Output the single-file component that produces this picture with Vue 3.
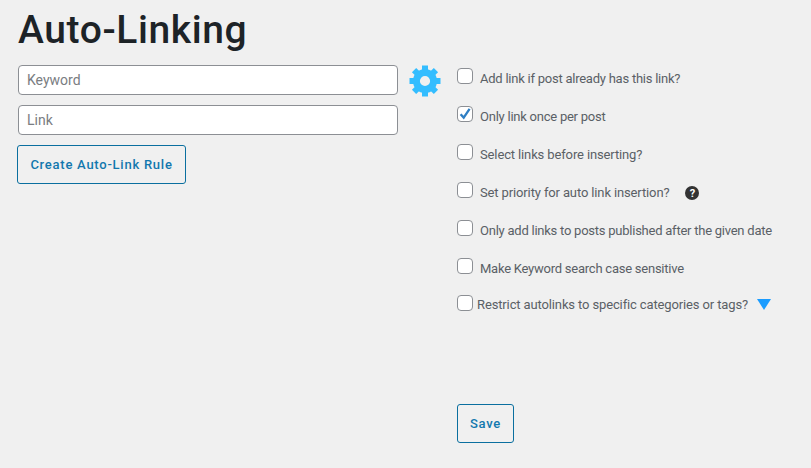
<script setup>
import { ref } from "vue";

const keyword = ref("");
const link = ref("");

const options = ref([
  { id: "dup", label: "Add link if post already has this link?", checked: false },
  { id: "once", label: "Only link once per post", checked: true },
  { id: "select", label: "Select links before inserting?", checked: false },
  { id: "priority", label: "Set priority for auto link insertion?", checked: false, help: true },
  { id: "date", label: "Only add links to posts published after the given date", checked: false },
  { id: "case", label: "Make Keyword search case sensitive", checked: false },
  { id: "restrict", label: "Restrict autolinks to specific categories or tags?", checked: false, arrow: true },
]);

const teeth = [0, 45, 90, 135, 180, 225, 270, 315];
</script>

<template>
  <div class="page">
    <h1 class="title">Auto-Linking</h1>
    <div class="columns">
      <div class="left">
        <div class="fields">
          <input v-model="keyword" class="text-input" type="text" placeholder="Keyword" />
          <input v-model="link" class="text-input" type="text" placeholder="Link" />
          <button class="btn create-btn">Create Auto-Link Rule</button>
        </div>
        <svg class="gear" viewBox="0 0 32 32" aria-hidden="true">
          <rect
            v-for="angle in teeth"
            :key="angle"
            x="13"
            y="0.5"
            width="6"
            height="8"
            fill="#33bdff"
            :transform="`rotate(${angle} 16 16)`"
          />
          <circle cx="16" cy="16" r="8.6" fill="none" stroke="#33bdff" stroke-width="7" />
        </svg>
      </div>
      <div class="right">
        <div class="options">
          <label v-for="opt in options" :key="opt.id" class="option" :class="opt.id">
            <span class="box">
              <input v-model="opt.checked" type="checkbox" />
              <svg v-if="opt.checked" class="tick" viewBox="0 0 16 16" aria-hidden="true">
                <path d="M3.6 8.2 6.7 11.6 12.6 2.8" fill="none" stroke="#2f7fc4" stroke-width="2.3" />
              </svg>
            </span>
            <span class="label-text">{{ opt.label }}</span>
            <span v-if="opt.help" class="help">?</span>
            <span v-if="opt.arrow" class="arrow"></span>
          </label>
        </div>
        <button class="btn save-btn">Save</button>
      </div>
    </div>
  </div>
</template>

<style>
html,
body {
  margin: 0;
  background: #f0f0f0;
}
</style>

<style scoped>
.page {
  height: 468px;
  box-sizing: border-box;
  padding: 6px 0 0 18px;
  font-family: Roboto, "Liberation Sans", sans-serif;
  background: #f0f0f0;
  overflow: hidden;
}

.title {
  margin: 0;
  height: 59px;
  font-size: 39px;
  line-height: 48px;
  font-weight: 500;
  letter-spacing: 0.6px;
  color: #1d2327;
}

.columns {
  display: flex;
}

.left {
  display: flex;
  align-items: flex-start;
  width: 439px;
}

.fields {
  display: flex;
  flex-direction: column;
  align-items: flex-start;
  gap: 10px;
  width: 380px;
}

.text-input {
  width: 100%;
  height: 30px;
  box-sizing: border-box;
  padding: 0 8px;
  border: 1px solid #8c8f94;
  border-radius: 4px;
  background: #fff;
  font: 14px Roboto, "Liberation Sans", sans-serif;
  color: #2c3338;
}

.text-input::placeholder {
  color: #7a7d82;
  opacity: 1;
}

.gear {
  width: 32px;
  height: 32px;
  margin-left: 11px;
}

.btn {
  box-sizing: border-box;
  border: 1px solid #0a6f9f;
  border-radius: 3px;
  background: #f0f0f0;
  color: #1278ae;
  font: 500 13px Roboto, "Liberation Sans", sans-serif;
  letter-spacing: 0.75px;
}

.create-btn {
  width: 169px;
  height: 39px;
  margin-left: -1px;
}

.right {
  display: flex;
  flex-direction: column;
  padding-top: 3px;
}

.options {
  display: flex;
  flex-direction: column;
  gap: 22px;
}

.option {
  display: flex;
  align-items: center;
  height: 16px;
  font-size: 13px;
  letter-spacing: -0.24px;
  color: #5a6066;
}

.select,
.priority,
.restrict {
  letter-spacing: -0.13px;
}

.restrict {
  margin-top: -1px;
}

.box {
  position: relative;
  width: 16px;
  height: 16px;
  flex: none;
}

.box input {
  appearance: none;
  display: block;
  width: 16px;
  height: 16px;
  margin: 0;
  box-sizing: border-box;
  border: 1px solid #8c8f94;
  border-radius: 4px;
  background: #fff;
}

.tick {
  position: absolute;
  left: 0;
  top: 0;
  width: 16px;
  height: 16px;
}

.label-text {
  margin: 4px 0 0 7px;
  white-space: nowrap;
}

.restrict .label-text {
  margin: 3px 0 0 4px;
}

.help {
  display: flex;
  align-items: center;
  justify-content: center;
  width: 14px;
  height: 14px;
  margin: 6px 0 0 16px;
  border-radius: 50%;
  background: #333;
  color: #fff;
  font-size: 11px;
  font-weight: 700;
}

.arrow {
  width: 0;
  height: 0;
  margin: 3px 0 0 9px;
  border-left: 7px solid transparent;
  border-right: 7px solid transparent;
  border-top: 11px solid #1a9cff;
}

.save-btn {
  width: 57px;
  height: 39px;
  margin-top: 93px;
}
</style>
